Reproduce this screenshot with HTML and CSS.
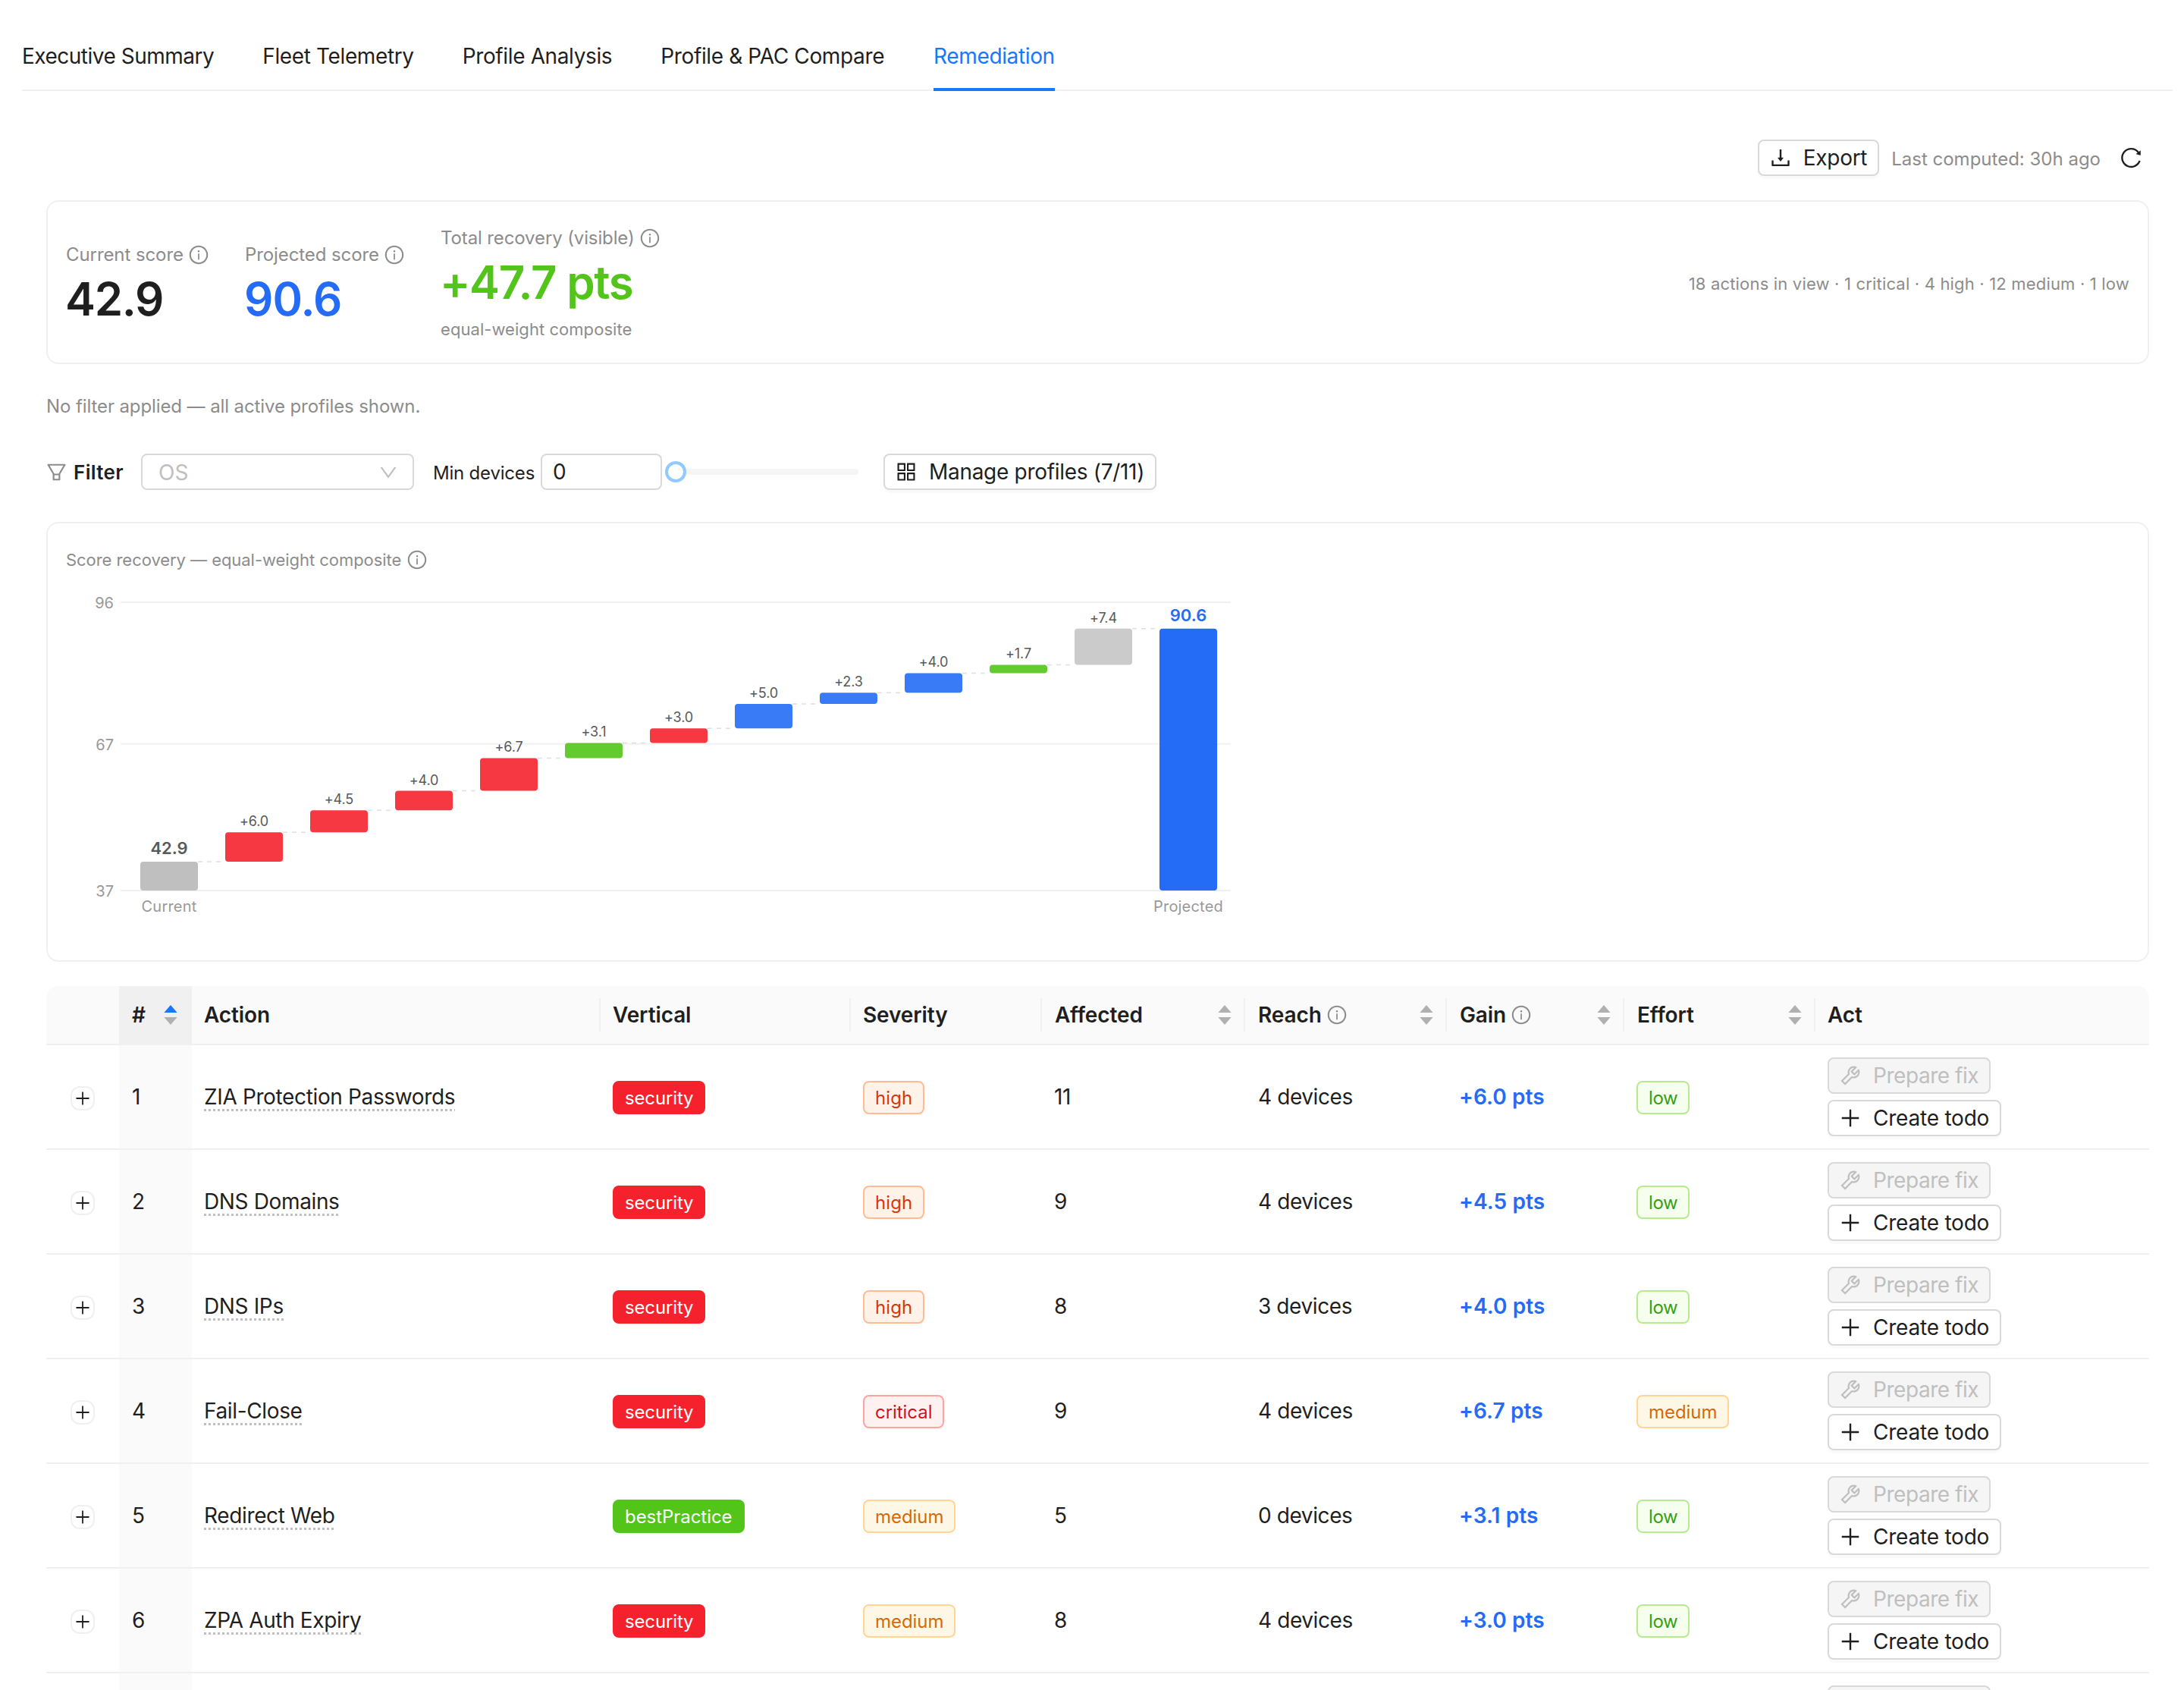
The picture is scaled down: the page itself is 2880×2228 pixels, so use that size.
FILE: index.html
```html
<!DOCTYPE html>
<html lang="en">
<head>
  <meta charset="UTF-8" />
  <meta name="viewport" content="width=device-width, initial-scale=1.0" />
  <title>Remediation</title>
  <link rel="stylesheet" href="styles.css">
</head>
<body>
  <svg class="sprite" aria-hidden="true">
    <symbol id="i-info" viewBox="0 0 1024 1024"><path d="M512 64C264.6 64 64 264.6 64 512s200.6 448 448 448 448-200.6 448-448S759.4 64 512 64zm0 820c-205.4 0-372-166.6-372-372s166.6-372 372-372 372 166.6 372 372-166.6 372-372 372z"/><path d="M464 336a48 48 0 1096 0 48 48 0 10-96 0zm72 112h-48c-4.4 0-8 3.6-8 8v272c0 4.4 3.6 8 8 8h48c4.4 0 8-3.6 8-8V456c0-4.4-3.6-8-8-8z"/></symbol>
    <symbol id="i-download" viewBox="0 0 1024 1024"><path d="M505.7 661a8 8 0 0012.6 0l112-141.7c4.1-5.2.4-12.9-6.3-12.9h-74.1V168c0-4.4-3.6-8-8-8h-60c-4.4 0-8 3.6-8 8v338.3H400c-6.7 0-10.4 7.7-6.3 12.9l112 141.8zM878 626h-60c-4.4 0-8 3.6-8 8v154H214V634c0-4.4-3.6-8-8-8h-60c-4.4 0-8 3.6-8 8v198c0 17.7 14.3 32 32 32h684c17.7 0 32-14.3 32-32V634c0-4.4-3.6-8-8-8z"/></symbol>
    <symbol id="i-reload" viewBox="0 0 1024 1024"><path d="M909.1 209.3l-56.4 44.1C775.8 155.1 656.2 92 521.9 92 290 92 102.3 279.5 102 511.5 101.7 743.7 289.8 932 521.9 932c181.3 0 335.8-115 394.6-276.1 1.5-4.2-.7-8.9-4.9-10.3l-56.7-19.5a8 8 0 00-10.1 4.8c-1.8 5-3.8 10-5.9 14.9-17.3 41-42.1 77.8-73.7 109.4A344.77 344.77 0 01655.9 829c-42.3 17.9-87.4 27-133.8 27-46.5 0-91.5-9.1-133.8-27A341.5 341.5 0 01279 755.2a342.16 342.16 0 01-73.7-109.4c-17.9-42.4-27-87.4-27-133.9s9.1-91.5 27-133.9c17.3-41 42.1-77.8 73.7-109.4 31.6-31.6 68.4-56.4 109.3-73.8 42.3-17.9 87.4-27 133.8-27 46.5 0 91.5 9.1 133.8 27a341.5 341.5 0 01109.3 73.8c9.9 9.9 19.2 20.4 27.8 31.4l-60.2 47a8 8 0 003 14.1l175.6 43c5 1.2 9.9-2.6 9.9-7.7l.8-180.9c-.1-6.6-7.8-10.3-13-6.2z"/></symbol>
    <symbol id="i-filter" viewBox="0 0 1024 1024"><path d="M880.1 154H143.9c-24.5 0-39.8 26.7-27.5 48L349 597.4V838c0 17.7 14.2 32 31.8 32h262.4c17.6 0 31.8-14.3 31.8-32V597.4L907.7 202c12.2-21.3-3.1-48-27.6-48zM603.4 798H420.6V642h182.9v156zm9.6-236.6l-9.5 16.6h-183l-9.5-16.6L212.7 226h598.6L613 561.4z"/></symbol>
    <symbol id="i-down" viewBox="0 0 1024 1024"><path d="M884 256h-75c-5.1 0-9.9 2.5-12.9 6.6L512 654.2 227.9 262.6c-3-4.1-7.8-6.6-12.9-6.6h-75c-6.5 0-10.3 7.4-6.5 12.7l352.6 486.1c12.8 17.6 39 17.6 51.7 0l352.6-486.1c3.9-5.3.1-12.7-6.4-12.7z"/></symbol>
    <symbol id="i-grid" viewBox="0 0 1024 1024"><path d="M464 144H160c-8.8 0-16 7.2-16 16v304c0 8.8 7.2 16 16 16h304c8.8 0 16-7.2 16-16V160c0-8.8-7.2-16-16-16zm-52 268H212V212h200v200zm452-268H560c-8.8 0-16 7.2-16 16v304c0 8.8 7.2 16 16 16h304c8.8 0 16-7.2 16-16V160c0-8.8-7.2-16-16-16zm-52 268H612V212h200v200zM464 544H160c-8.8 0-16 7.2-16 16v304c0 8.8 7.2 16 16 16h304c8.8 0 16-7.2 16-16V560c0-8.8-7.2-16-16-16zm-52 268H212V612h200v200zm452-268H560c-8.8 0-16 7.2-16 16v304c0 8.8 7.2 16 16 16h304c8.8 0 16-7.2 16-16V560c0-8.8-7.2-16-16-16zm-52 268H612V612h200v200z"/></symbol>
    <symbol id="i-plus" viewBox="0 0 1024 1024"><path d="M482 152h60q8 0 8 8v704q0 8-8 8h-60q-8 0-8-8V160q0-8 8-8z"/><path d="M160 474h704q8 0 8 8v60q0 8-8 8H160q-8 0-8-8v-60q0-8 8-8z"/></symbol>
    <symbol id="i-tool" viewBox="0 0 1024 1024"><path d="M876.6 239.5c-.5-.9-1.2-1.8-2-2.5-5-5-13.1-5-18.1 0L684.2 409.3l-67.9-67.9L788.7 169c.8-.8 1.4-1.6 2-2.5 3.6-6.1 1.6-13.9-4.5-17.5-98.2-58-226.8-44.7-311.3 39.7-67 67-89.2 162-66.5 247.4l-293 293c-3 3-2.8 7.9.3 11l169.7 169.7c3.1 3.1 8.1 3.3 11 .3l292.9-292.9c85.5 22.8 180.5.7 247.6-66.4 84.4-84.5 97.7-213.1 39.7-311.3zM786 499.8c-58.1 58.1-145.3 69.3-214.6 33.6l-8.8 8.8-.1-.1-274 274.1-79.2-79.2 230.1-230.1s0 .1.1.1l52.8-52.8c-35.7-69.3-24.5-156.5 33.6-214.6a184.2 184.2 0 01144-53.5L537 318.9a32.05 32.05 0 000 45.3l124.5 124.5a32.05 32.05 0 0045.3 0l132.8-132.8c3.7 51.8-14.4 104.8-53.6 143.9z"/></symbol>
    <symbol id="i-sort" viewBox="0 0 18 26"><path class="up" d="M9 0l8.6 10H.4z"/><path class="dn" d="M9 26L.4 16h17.2z"/></symbol>
  </svg>

  <nav class="tabs">
    <a class="tab first">Executive Summary</a>
    <a class="tab">Fleet Telemetry</a>
    <a class="tab">Profile Analysis</a>
    <a class="tab">Profile &amp; PAC Compare</a>
    <a class="tab active">Remediation</a>
  </nav>

  <main>
    <div class="toolbar">
      <button class="btn"><svg class="icon"><use href="#i-download"/></svg>Export</button>
      <span class="computed">Last computed: 30h ago</span>
      <button class="btn-icon"><svg class="icon"><use href="#i-reload"/></svg></button>
    </div>

    <section class="card summary">
      <div class="stat">
        <div class="label">Current score<svg class="icon"><use href="#i-info"/></svg></div>
        <div class="value">42.9</div>
      </div>
      <div class="stat">
        <div class="label">Projected score<svg class="icon"><use href="#i-info"/></svg></div>
        <div class="value blue">90.6</div>
      </div>
      <div class="stat">
        <div class="label tight">Total recovery (visible)<svg class="icon"><use href="#i-info"/></svg></div>
        <div class="value green">+47.7 pts</div>
        <div class="sub">equal-weight composite</div>
      </div>
      <div class="counts">18 actions in view · 1 critical · 4 high · 12 medium · 1 low</div>
    </section>

    <p class="note">No filter applied — all active profiles shown.</p>

    <div class="filters">
      <svg class="icon funnel"><use href="#i-filter"/></svg>
      <strong>Filter</strong>
      <div class="select"><span>OS</span><svg class="icon"><use href="#i-down"/></svg></div>
      <label class="min-label">Min devices</label>
      <div class="number">0</div>
      <div class="slider"><div class="handle"></div></div>
      <button class="btn manage"><svg class="icon"><use href="#i-grid"/></svg>Manage profiles (7/11)</button>
    </div>

    <section class="card chart-card">
      <div class="chart-title">Score recovery — equal-weight composite<svg class="icon"><use href="#i-info"/></svg></div>
      <svg id="chart" width="1540" height="460"></svg>
    </section>

    <table>
      <colgroup>
        <col class="c-expand"><col class="c-num"><col class="c-action"><col class="c-vertical"><col class="c-severity">
        <col class="c-affected"><col class="c-reach"><col class="c-gain"><col class="c-effort"><col class="c-act">
      </colgroup>
      <thead>
        <tr>
          <th></th>
          <th class="sorted"><div class="th">#<svg class="sorter asc"><use href="#i-sort"/></svg></div></th>
          <th class="sep">Action</th>
          <th class="sep">Vertical</th>
          <th class="sep">Severity</th>
          <th class="sep"><div class="th">Affected<svg class="sorter"><use href="#i-sort"/></svg></div></th>
          <th class="sep"><div class="th">Reach<svg class="icon"><use href="#i-info"/></svg><svg class="sorter"><use href="#i-sort"/></svg></div></th>
          <th class="sep"><div class="th">Gain<svg class="icon"><use href="#i-info"/></svg><svg class="sorter"><use href="#i-sort"/></svg></div></th>
          <th class="sep"><div class="th">Effort<svg class="sorter"><use href="#i-sort"/></svg></div></th>
          <th>Act</th>
        </tr>
      </thead>
      <tbody id="rows"></tbody>
    </table>
  </main>

  <script>
    const rows = [
      { n: 1, action: 'ZIA Protection Passwords', vertical: 'security', severity: 'high', affected: 11, reach: '4 devices', gain: '+6.0 pts', effort: 'low' },
      { n: 2, action: 'DNS Domains', vertical: 'security', severity: 'high', affected: 9, reach: '4 devices', gain: '+4.5 pts', effort: 'low' },
      { n: 3, action: 'DNS IPs', vertical: 'security', severity: 'high', affected: 8, reach: '3 devices', gain: '+4.0 pts', effort: 'low' },
      { n: 4, action: 'Fail-Close', vertical: 'security', severity: 'critical', affected: 9, reach: '4 devices', gain: '+6.7 pts', effort: 'medium' },
      { n: 5, action: 'Redirect Web', vertical: 'bestPractice', severity: 'medium', affected: 5, reach: '0 devices', gain: '+3.1 pts', effort: 'low' },
      { n: 6, action: 'ZPA Auth Expiry', vertical: 'security', severity: 'medium', affected: 8, reach: '4 devices', gain: '+3.0 pts', effort: 'low' },
      {}
    ];

    const icon = id => `<svg class="icon"><use href="#i-${id}"/></svg>`;
    const tag = t => t ? `<span class="tag ${t}">${t}</span>` : '';

    document.getElementById('rows').innerHTML = rows.map(r => `
      <tr>
        <td><span class="expand">${icon('plus')}</span></td>
        <td class="sorted">${r.n || ''}</td>
        <td>${r.action ? `<span class="action">${r.action}</span>` : ''}</td>
        <td>${tag(r.vertical)}</td>
        <td>${tag(r.severity)}</td>
        <td>${r.affected || ''}</td>
        <td class="reach">${r.reach || ''}</td>
        <td class="gain">${r.gain || ''}</td>
        <td>${tag(r.effort)}</td>
        <td><div class="acts">
          <button class="btn fix" disabled>${icon('tool')}Prepare fix</button>
          <button class="btn todo">${icon('plus')}Create todo</button>
        </div></td>
      </tr>`).join('');

    // waterfall chart
    const RED = '#f5222d', GREEN = '#52c41a', BLUE = '#246bf6', GRAY = '#bfbfbf';
    const steps = [[6.0, RED], [4.5, RED], [4.0, RED], [6.7, RED], [3.1, GREEN], [3.0, RED], [5.0, BLUE], [2.3, BLUE], [4.0, BLUE], [1.7, GREEN], [7.4, GRAY]];
    const MIN = 37, MAX = 96, TOP = 38, BOTTOM = 418, LEFT = 72, RIGHT = 1536, BAR = 76, STEP = 112;
    const y = v => BOTTOM - (v - MIN) * (BOTTOM - TOP) / (MAX - MIN);
    const x = i => 98 + i * STEP;
    let svg = '';

    for (const t of [96, 67, 37]) {
      svg += `<line class="grid" x1="${LEFT}" x2="${RIGHT}" y1="${y(t)}" y2="${y(t)}"/><text class="tick" x="63" y="${y(t) + 8}">${t}</text>`;
    }

    function bar(i, from, to, color, cls) {
      svg += `<rect class="${cls}" x="${x(i)}" y="${y(to)}" width="${BAR}" height="${y(from) - y(to)}" rx="4" fill="${color}"/>`;
    }
    function text(i, ty, str, cls) {
      svg += `<text class="${cls}" x="${x(i) + BAR / 2}" y="${ty}">${str}</text>`;
    }
    function link(i, v) {
      svg += `<line class="link" x1="${x(i) + BAR}" x2="${x(i + 1)}" y1="${y(v)}" y2="${y(v)}"/>`;
    }

    let total = 42.9;
    bar(0, MIN, total, GRAY, 'end');
    text(0, y(total) - 10, '42.9', 'total');
    text(0, BOTTOM + 28, 'Current', 'cat');
    link(0, total);
    steps.forEach(([d, color], k) => {
      bar(k + 1, total, total + d, color, color === GRAY ? 'rest' : 'step');
      total += d;
      text(k + 1, y(total) - 8, '+' + d.toFixed(1), 'delta');
      link(k + 1, total);
    });
    bar(12, MIN, total, BLUE, 'end');
    text(12, y(total) - 10, '90.6', 'total projected');
    text(12, BOTTOM + 28, 'Projected', 'cat');
    document.getElementById('chart').innerHTML = svg;
  </script>
</body>
</html>
```
FILE: styles.css
```css
/* Reset & Base */
* { box-sizing: border-box; margin: 0; padding: 0; }
html, body { height: 2228px; overflow: hidden; }
body { font-family: Inter, "Liberation Sans", sans-serif; font-size: 28px; line-height: 44px; letter-spacing: -0.4px; color: #1f1f1f; background: #fff; }
button { font: inherit; letter-spacing: inherit; color: inherit; }
.sprite { position: absolute; width: 0; height: 0; }
.icon { width: 28px; height: 28px; fill: currentColor; flex: none; display: block; }

/* Tabs */
.tabs { display: flex; gap: 64px; margin: 0 15px 0 29px; padding-top: 52px; height: 120px; box-shadow: inset 0 -2px #f0f0f0; letter-spacing: -0.37px; }
.tab { height: 68px; white-space: nowrap; }
.tab.first { letter-spacing: -0.5px; }
.tab.active { margin-left: 1px; color: #1677ff; border-bottom: 4px solid #1677ff; }

main { margin: 64px 46px 0 61px; }

/* Toolbar */
.toolbar { display: flex; justify-content: flex-end; align-items: center; height: 48px; margin-bottom: 32px; }
.btn { display: flex; align-items: center; gap: 14px; width: max-content; height: 48px; padding: 0 14px 0 12px; background: #fff; border: 2px solid #d9d9d9; border-radius: 8px; box-shadow: 0 4px 0 rgba(0,0,0,.02); letter-spacing: -0.3px; white-space: nowrap; }
.btn .icon, .btn-icon .icon { width: 32px; height: 32px; }
.btn:disabled { color: #bfbfbf; background: #f5f5f5; box-shadow: none; }
.btn-icon { display: flex; align-items: center; justify-content: center; width: 48px; height: 48px; background: none; border: none; }
.computed { margin: 3px 16px 0; font-size: 24px; letter-spacing: 0; color: #8c8c8c; }

/* Cards */
.card { border: 2px solid #f0f0f0; border-radius: 16px; padding: 0 24px; }
.summary { display: flex; align-items: center; gap: 47px; height: 216px; }
.label { display: flex; align-items: center; gap: 6px; font-size: 24px; line-height: 38px; letter-spacing: -0.08px; color: #8c8c8c; }
.label.tight { letter-spacing: -0.12px; }
.value { margin-top: 6px; margin-left: -1px; font-size: 60px; font-weight: 600; line-height: 66px; letter-spacing: -1.3px; }
.value.blue { color: #246bf6; letter-spacing: -0.9px; }
.value.green { color: #52c41a; letter-spacing: -1.3px; }
.sub { margin-top: 14px; font-size: 22px; line-height: 30px; letter-spacing: 0.05px; color: #8c8c8c; }
.counts { margin: 3px 0 0 auto; font-size: 22px; letter-spacing: 0.18px; color: #8c8c8c; }

.note { margin-top: 37px; font-size: 24px; line-height: 38px; letter-spacing: -0.1px; color: #8c8c8c; }

/* Filters */
.filters { display: flex; align-items: center; height: 48px; margin: 43px 0 42px; }
.funnel { width: 31px; height: 31px; margin-left: -2px; color: #8c8c8c; }
.filters strong { width: 89px; margin: 2px 0 0 7px; font-size: 26px; font-weight: 600; letter-spacing: 0.35px; }
.select { display: flex; align-items: center; justify-content: space-between; width: 360px; height: 48px; padding: 1px 18px 0 21px; border: 2px solid #d9d9d9; border-radius: 8px; color: #bfbfbf; letter-spacing: 0; }
.min-label { width: 142px; margin: 3px 0 0 25px; font-size: 24px; letter-spacing: -0.2px; }
.number { width: 160px; height: 48px; padding-left: 14px; border: 2px solid #d9d9d9; border-radius: 8px; }
.slider { position: relative; width: 241px; height: 8px; margin-left: 18px; background: #f5f5f5; border-radius: 4px; }
.handle { position: absolute; left: -14px; top: -10px; width: 28px; height: 28px; border: 4px solid #91caff; border-radius: 50%; background: #fff; }
.manage { margin-left: 33px; }

/* Chart */
.chart-card { height: 580px; padding-top: 30px; }
.chart-title { display: flex; align-items: center; gap: 7px; font-size: 22px; line-height: 36px; letter-spacing: -0.05px; color: #8c8c8c; }
#chart { display: block; letter-spacing: 0; }
.grid { stroke: #f0f0f0; stroke-width: 2; }
.link { stroke: #d9d9d9; stroke-width: 1.5; stroke-dasharray: 6 6; opacity: .8; }
.step { opacity: .9; }
.rest { opacity: .82; }
.tick { font-size: 20px; fill: #999; text-anchor: end; }
.cat { font-size: 20px; letter-spacing: 0.2px; fill: #999; text-anchor: middle; }
.delta { font-size: 18px; letter-spacing: -0.1px; fill: #595959; text-anchor: middle; }
.total { font-size: 22px; font-weight: 600; fill: #595959; text-anchor: middle; }
.total.projected { fill: #246bf6; }

/* Table */
table { width: 2773px; margin-top: 32px; table-layout: fixed; border-collapse: separate; border-spacing: 0; }
.c-expand, .c-num { width: 96px; }
.c-action { width: 539px; }
.c-vertical { width: 330px; }
.c-severity { width: 252px; }
.c-affected { width: 268px; }
.c-reach { width: 266px; }
.c-gain { width: 234px; }
.c-effort { width: 252px; }
.c-act { width: 440px; }
th, td { padding: 0 16px; text-align: left; vertical-align: middle; border-bottom: 2px solid #f0f0f0; }
th { height: 78px; font-weight: 600; letter-spacing: -0.1px; background: #fafafa; }
th:first-child { border-top-left-radius: 16px; }
th:last-child { border-top-right-radius: 16px; }
th.sep { background: linear-gradient(#f0f0f0, #f0f0f0) right center / 2px 44px no-repeat #fafafa; }
th.sorted { background: #f0f0f0; }
.th { display: flex; align-items: center; padding-left: 1px; }
.th .icon { margin-left: 6px; color: #8c8c8c; }
.sorter { width: 18px; height: 26px; margin-left: auto; margin-right: 2px; fill: #b0b0b0; --up: #b0b0b0; }
.sorter.asc { margin-right: 3px; --up: #1677ff; }
.up { fill: var(--up); }

td { height: 138px; }
td.sorted { padding-left: 17px; background: #fafafa; }
.expand { display: flex; align-items: center; justify-content: center; width: 32px; height: 32px; margin: 4px auto 0; border: 2px solid #f0f0f0; border-radius: 12px; background: #fff; }
.expand .icon { width: 24px; height: 24px; }
.action { display: block; width: max-content; line-height: 38px; letter-spacing: -0.36px; background: repeating-linear-gradient(90deg, #bfbfbf 0 3px, transparent 3px 6px) left bottom / 100% 3px no-repeat; }
.reach { padding-left: 17px; }
.gain { font-weight: 600; letter-spacing: 0.1px; color: #246bf6; }
.acts { display: flex; flex-direction: column; gap: 8px; }
.fix { letter-spacing: -0.45px; }
.todo { letter-spacing: -0.22px; }

.tag { display: block; width: max-content; height: 44px; margin-top: 2px; padding: 0 14px; border: 2px solid; border-radius: 8px; font-size: 24px; line-height: 41px; letter-spacing: -0.05px; }
.security { letter-spacing: -0.15px; color: #fff; background: #f5222d; border-color: #f5222d; }
.bestPractice { color: #fff; background: #52c41a; border-color: #52c41a; }
.critical { color: #cf1322; background: #fff1f0; border-color: #ffa39e; }
.high { letter-spacing: 0.1px; color: #d4380d; background: #fff2e8; border-color: #ffbb96; }
.medium { color: #d46b08; background: #fff7e6; border-color: #ffd591; }
.low { letter-spacing: -0.4px; color: #389e0d; background: #f6ffed; border-color: #b7eb8f; }
```
